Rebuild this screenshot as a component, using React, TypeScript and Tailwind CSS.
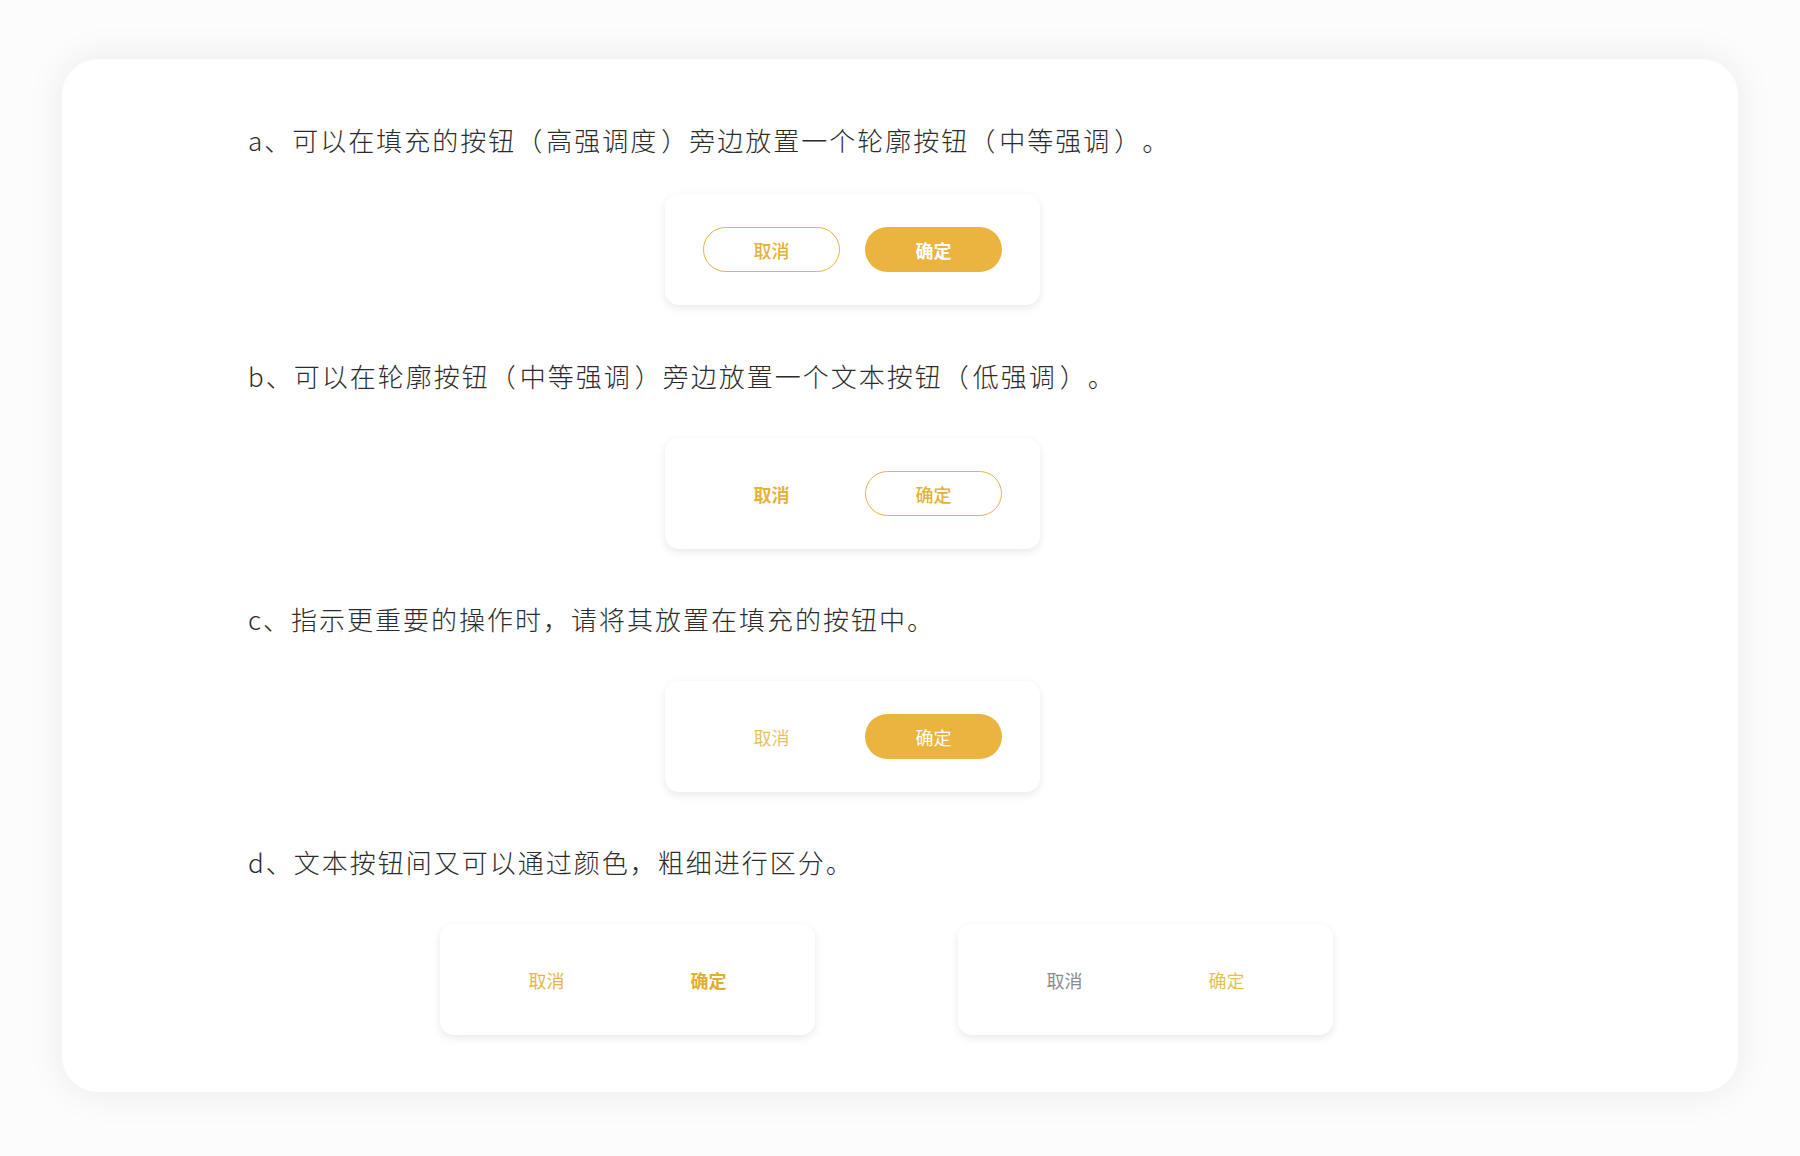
import React from "react";

const font = { fontFamily: '"Noto Sans CJK SC", "Noto Sans", sans-serif' };

function BtnCard({ children, className = "" }: { children: React.ReactNode; className?: string }) {
  return (
    <div
      className={
        "w-[375px] h-[111px] rounded-[14px] bg-white shadow-[0_3px_10px_rgba(0,0,0,0.09)] flex items-center justify-between px-[38px] " +
        className
      }
    >
      {children}
    </div>
  );
}

function Slot({ children, className = "" }: { children: React.ReactNode; className?: string }) {
  return (
    <div className={"w-[137px] h-[45px] rounded-full flex items-center justify-center text-[18px] leading-none " + className}>
      {children}
    </div>
  );
}

function L() {
  return <span className="pr-[2px]">（</span>;
}
function R() {
  return <span className="pl-[3px]">）</span>;
}

function Heading({ children, className = "" }: { children: React.ReactNode; className?: string }) {
  return (
    <div className={"h-[40px] flex items-center text-[26px] font-light text-[#2b2b2b] tracking-[2px] whitespace-pre " + className}>
      {children}
    </div>
  );
}

export default function App() {
  return (
    <div className="w-[1800px] h-[1156px] bg-[#fcfcfc] pt-[59px] pl-[62px]" style={font}>
      <div className="w-[1676px] h-[1033px] rounded-[36px] bg-white shadow-[0_0_40px_rgba(0,0,0,0.07)] pt-[60px] pl-[186px]">
        <Heading>
          <span>a、可以在填充的按钮</span>
          <L />
          <span>高强调度</span>
          <R />
          <span>旁边放置一个轮廓按钮</span>
          <L />
          <span>中等强调</span>
          <R />
          <span>。</span>
        </Heading>
        <BtnCard className="mt-[35px] ml-[417px]">
          <Slot className="border-[1.5px] border-[#E6B544] text-[#E6B139] font-medium">取消</Slot>
          <Slot className="bg-[#EAB43F] text-white font-bold">确定</Slot>
        </BtnCard>

        <Heading className="mt-[50px]">
          <span>b、可以在轮廓按钮</span>
          <L />
          <span>中等强调</span>
          <R />
          <span>旁边放置一个文本按钮</span>
          <L />
          <span>低强调</span>
          <R />
          <span>。</span>
        </Heading>
        <BtnCard className="mt-[43px] ml-[417px]">
          <Slot className="text-[#E6B139] font-bold">取消</Slot>
          <Slot className="border-[1.5px] border-[#E6B544] text-[#E6B139] font-medium">确定</Slot>
        </BtnCard>

        <Heading className="mt-[49px]">c、指示更重要的操作时，请将其放置在填充的按钮中。</Heading>
        <BtnCard className="mt-[43px] ml-[417px]">
          <Slot className="text-[#E8C26A]">取消</Slot>
          <Slot className="bg-[#EAB43F] text-white">确定</Slot>
        </BtnCard>

        <Heading className="mt-[49px]">d、文本按钮间又可以通过颜色，粗细进行区分。</Heading>
        <div className="mt-[43px] ml-[192px] flex gap-[143px]">
          <BtnCard>
            <Slot className="text-[#E6B83F]">取消</Slot>
            <Slot className="text-[#E3AE2C] font-bold">确定</Slot>
          </BtnCard>
          <BtnCard>
            <Slot className="text-[#8c8c8c]">取消</Slot>
            <Slot className="text-[#E8BE55]">确定</Slot>
          </BtnCard>
        </div>
      </div>
    </div>
  );
}
